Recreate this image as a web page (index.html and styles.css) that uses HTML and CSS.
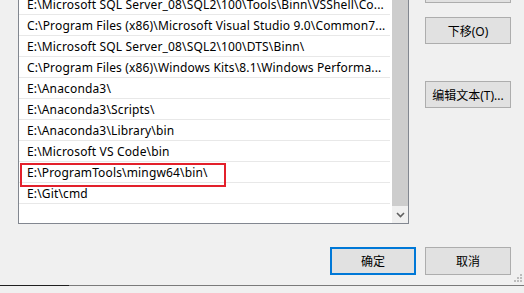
FILE: index.html
```html
<!DOCTYPE html>
<html lang="zh-CN">

<head>
    <meta charset="UTF-8">
    <title>编辑环境变量</title>
    <link rel="stylesheet" href="styles.css">
</head>

<body>
    <div class="dialog">
        <div class="main">
            <div class="listbox">
                <ul class="rows">
                    <li>E:\Microsoft SQL Server_08\SQL2\100\Tools\Binn\VSShell\Co...</li>
                    <li>C:\Program Files (x86)\Microsoft Visual Studio 9.0\Common7...</li>
                    <li>E:\Microsoft SQL Server_08\SQL2\100\DTS\Binn\</li>
                    <li>C:\Program Files (x86)\Windows Kits\8.1\Windows Performa...</li>
                    <li>E:\Anaconda3\</li>
                    <li>E:\Anaconda3\Scripts\</li>
                    <li>E:\Anaconda3\Library\bin</li>
                    <li>E:\Microsoft VS Code\bin</li>
                    <li class="marked">E:\ProgramTools\mingw64\bin\<span class="mark"></span></li>
                    <li>E:\Git\cmd</li>
                </ul>
                <div class="scrollbar">
                    <div class="thumb"></div>
                    <div class="arrow">
                        <svg width="9" height="6" viewBox="0 0 9 6">
                            <path d="M1 1 L4.5 4.5 L8 1" fill="none" stroke="#606060" stroke-width="1.6"/>
                        </svg>
                    </div>
                </div>
            </div>
            <div class="side">
                <a href="javascript:;" class="btn up"></a>
                <a href="javascript:;" class="btn">下移(O)</a>
                <a href="javascript:;" class="btn edit">编辑文本(T)...</a>
            </div>
        </div>
        <div class="footer">
            <a href="javascript:;" class="btn big default">确定</a>
            <a href="javascript:;" class="btn big">取消</a>
        </div>
        <span class="grip">
            <i style="left: 6px; top: 0;"></i>
            <i style="left: 3px; top: 3px;"></i>
            <i style="left: 6px; top: 3px;"></i>
            <i style="left: 0; top: 6px;"></i>
            <i style="left: 3px; top: 6px;"></i>
            <i style="left: 6px; top: 6px;"></i>
        </span>
    </div>
</body>

</html>
```

FILE: styles.css
```css
* {
    margin: 0;
    padding: 0;
    box-sizing: border-box;
    text-decoration: none;
    list-style: none;
}

html,
body {
    width: 524px;
    height: 293px;
    overflow: hidden;
}

body {
    background: #f0f0f0;
    font-family: "Noto Sans", "Noto Sans CJK SC", sans-serif;
    font-size: 12px;
    color: #000;
}

.dialog {
    position: relative;
    height: 293px;
    border-bottom: 1px solid #7a7a7a;
}

.dialog::after {
    content: "";
    position: absolute;
    left: 0;
    bottom: -1px;
    width: 69px;
    height: 1px;
    background: #1f1f1f;
}

.main {
    display: flex;
    margin-top: -7px;
}

.listbox {
    display: flex;
    width: 391px;
    height: 231px;
    margin-left: 18px;
    border: 1px solid #828790;
    background: #fff;
}

.rows {
    flex: 1;
    padding-right: 2px;
}

.rows li {
    position: relative;
    height: 21px;
    padding-top: 1px;
    line-height: 20px;
    padding-left: 8px;
    letter-spacing: 0.15px;
    white-space: nowrap;
    border-bottom: 1px solid #e8e8e8;
}

.mark {
    position: absolute;
    left: 1px;
    top: 1px;
    width: 206px;
    height: 24px;
    border: 2px solid #e3202b;
}

.scrollbar {
    display: flex;
    flex-direction: column;
    width: 16px;
    background: #f0f0f0;
}

.thumb {
    flex: 1;
    background: #cdcdcd;
}

.arrow {
    display: flex;
    align-items: center;
    justify-content: center;
    height: 17px;
}

.side {
    display: flex;
    flex-direction: column;
    margin-left: 16px;
    margin-top: -17px;
}

.btn {
    display: flex;
    align-items: center;
    justify-content: center;
    width: 86px;
    height: 27px;
    border: 1px solid #adadad;
    background: #e1e1e1;
    color: #000;
    font-family: "Noto Sans", "Noto Sans CJK SC", sans-serif;
}

.side .btn {
    margin-bottom: 14px;
}

.side .edit {
    margin-top: 23px;
}

.footer {
    display: flex;
    justify-content: flex-end;
    gap: 9px;
    padding-right: 13px;
    margin-top: 23px;
}

.btn.big {
    height: 28px;
}

.btn.default {
    border: 2px solid #0078d7;
}

.grip {
    position: absolute;
    right: 2px;
    bottom: 3px;
    width: 8px;
    height: 8px;
}

.grip i {
    position: absolute;
    width: 2px;
    height: 2px;
    background: #bcbcbc;
}
```
